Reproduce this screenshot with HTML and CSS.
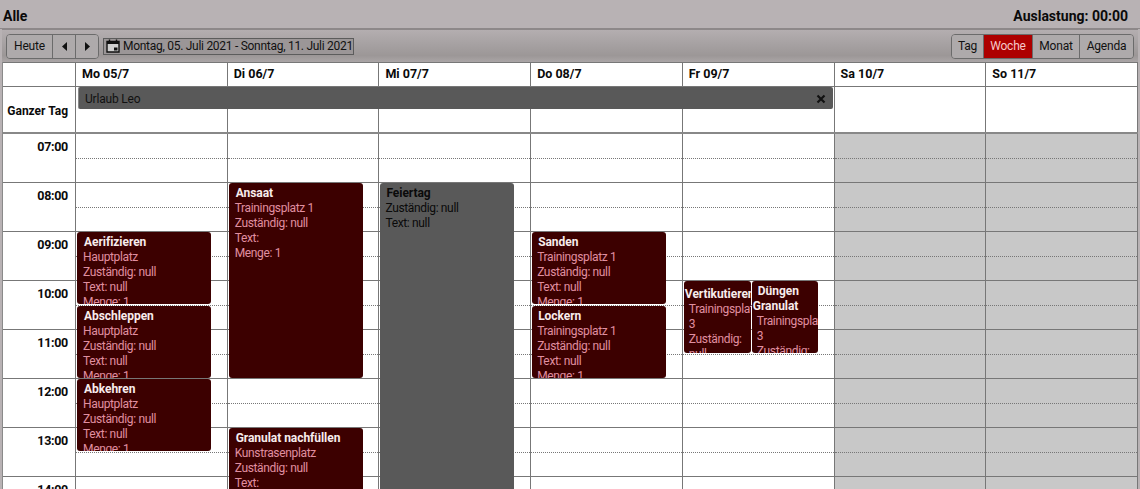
FILE: index.html
```html
<!DOCTYPE html>
<html lang="de">
<head>
<meta charset="utf-8">
<title>Kalender</title>
<link rel="stylesheet" href="styles.css">
</head>
<body>
<div class="page">
  <header class="titlebar"><span>Alle</span><span>Auslastung: 00:00</span></header>
  <div class="toolbar">
    <div class="btn-group">
      <button class="btn today">Heute</button>
      <button class="btn arrow"><svg width="7" height="9" viewBox="0 0 7 9"><path d="M6 0v9L1 4.500z" fill="#111"/></svg></button>
      <button class="btn arrow"><svg width="7" height="9" viewBox="0 0 7 9"><path d="M1 0v9l5-4.500z" fill="#111"/></svg></button>
    </div>
    <div class="daterange">
      <svg class="cal-icon" width="14" height="14" viewBox="0 0 14 14"><path d="M1 2.500h12v10.500H1z" fill="#cfcfcf" stroke="#111" stroke-width="1.400"/><path d="M1 2.500h12v2.500H1z" fill="#111"/><path d="M3.500 .5v2M10.500 .5v2" stroke="#111" stroke-width="1.400"/><path d="M8 8.500h3.500v3H8z" fill="#111"/></svg>
      <span>Montag, 05. Juli 2021 - Sonntag, 11. Juli 2021</span>
    </div>
    <div class="btn-group views">
      <button class="btn v-tag">Tag</button>
      <button class="btn v-woche active">Woche</button>
      <button class="btn v-monat">Monat</button>
      <button class="btn v-agenda">Agenda</button>
    </div>
  </div>
  <div class="calendar">
    <div class="row head">
      <div class="gutter"></div>
      <div class="cell">Mo 05/7</div><div class="cell">Di 06/7</div><div class="cell">Mi 07/7</div><div class="cell">Do 08/7</div><div class="cell">Fr 09/7</div><div class="cell">Sa 10/7</div><div class="cell">So 11/7</div>
    </div>
    <div class="row allday">
      <div class="gutter">Ganzer Tag</div>
      <div class="cell"></div><div class="cell"></div><div class="cell"></div><div class="cell"></div><div class="cell"></div><div class="cell"></div><div class="cell"></div>
      <div class="allday-event"><span>Urlaub Leo</span><svg width="10" height="10" viewBox="0 0 10 10"><path d="M1.500 1.500l7 7M8.500 1.500l-7 7" stroke="#111" stroke-width="2.200"/></svg></div>
    </div>
    <div class="times">
      <div class="gutter-col">
        <div class="hour">07:00</div><div class="hour">08:00</div><div class="hour">09:00</div><div class="hour">10:00</div><div class="hour">11:00</div><div class="hour">12:00</div><div class="hour">13:00</div><div class="hour">14:00</div>
      </div>
      <div class="day">
        <div class="slots"><i></i><i></i><i></i><i></i><i></i><i></i><i></i><i></i></div>
        <div class="ev w-full pad6 h9 ev-a"><b>Aerifizieren</b><p>Hauptplatz</p><p>Zuständig: null</p><p>Text: null</p><p>Menge: 1</p></div>
        <div class="ev w-full pad6 h9 ev-b"><b>Abschleppen</b><p>Hauptplatz</p><p>Zuständig: null</p><p>Text: null</p><p>Menge: 1</p></div>
        <div class="ev w-full pad6 h9 ev-c"><b>Abkehren</b><p>Hauptplatz</p><p>Zuständig: null</p><p>Text: null</p><p>Menge: 1</p></div>
      </div>
      <div class="day">
        <div class="slots"><i></i><i></i><i></i><i></i><i></i><i></i><i></i><i></i></div>
        <div class="ev w-full pad6 ev-ansaat"><b>Ansaat</b><p>Trainingsplatz 1</p><p>Zuständig: null</p><p>Text:</p><p>Menge: 1</p></div>
        <div class="ev w-full pad6 ev-granulat"><b>Granulat nachfüllen</b><p>Kunstrasenplatz</p><p>Zuständig: null</p><p>Text:</p></div>
      </div>
      <div class="day">
        <div class="slots"><i></i><i></i><i></i><i></i><i></i><i></i><i></i><i></i></div>
        <div class="ev w-full ev-feiertag"><b>Feiertag</b><p>Zuständig: null</p><p>Text: null</p></div>
      </div>
      <div class="day">
        <div class="slots"><i></i><i></i><i></i><i></i><i></i><i></i><i></i><i></i></div>
        <div class="ev w-full h9 ev-a"><b>Sanden</b><p>Trainingsplatz 1</p><p>Zuständig: null</p><p>Text: null</p><p>Menge: 1</p></div>
        <div class="ev w-full h9 ev-b"><b>Lockern</b><p>Trainingsplatz 1</p><p>Zuständig: null</p><p>Text: null</p><p>Menge: 1</p></div>
      </div>
      <div class="day">
        <div class="slots"><i></i><i></i><i></i><i></i><i></i><i></i><i></i><i></i></div>
        <div class="ev narrow ev-vert"><b>Vertikutieren</b><p>Trainingsplatz 3</p><p>Zuständig: null</p></div>
        <div class="ev narrow ev-dueng"><b class="dueng-a">Düngen</b><b>Granulat</b><p>Trainingsplatz 3</p><p>Zuständig: null</p></div>
      </div>
      <div class="day off"><div class="slots"><i></i><i></i><i></i><i></i><i></i><i></i><i></i><i></i></div></div>
      <div class="day off"><div class="slots"><i></i><i></i><i></i><i></i><i></i><i></i><i></i><i></i></div></div>
    </div>
  </div>
</div>
</body>
</html>
```
FILE: styles.css
```css
* { box-sizing: border-box; }
html, body { margin: 0; height: 100%; overflow: hidden; }
body { background: #b8b2b4; font-family: Roboto, "Open Sans", sans-serif; font-size: 12px; color: #111; }
.page { width: 1140px; height: 489px; overflow: hidden; }
.titlebar { height: 29px; display: flex; justify-content: space-between; align-items: center; padding: 3px 12px 0 3px; font-weight: 700; font-size: 14px; color: #0a0a0a; border-bottom: 1px solid #8d8889; }
.toolbar { height: 33px; margin-left: 2px; width: 1136px; display: flex; align-items: center; padding: 0 4px; background: linear-gradient(#b4aeb0 0%, #a6a1a2 45%, #9c9797 80%, #aaa5a6 100%); border-top: 1px solid #8d8889; }
.btn-group { display: flex; height: 25px; border: 1px solid #6b6b6b; border-radius: 4px; overflow: hidden; }
.btn { font: inherit; letter-spacing: -.2px; color: #111; height: 100%; border: 0; border-left: 1px solid #6b6b6b; background: #aeaaab; padding: 0; margin: 0; }
.btn:first-child { border-left: 0; }
.today { width: 45px; }
.arrow { width: 23px; display: flex; align-items: center; justify-content: center; }
.active { background: #ad0000; color: #f6c9c9; }
.v-tag { width: 31px; }
.v-woche { width: 49px; }
.v-monat { width: 47px; }
.v-agenda { width: 54px; }
.daterange { margin-left: 4px; height: 17px; display: flex; align-items: center; gap: 3px; padding: 0 2px; border: 1px solid #5c5c5c; background: #9b9697; white-space: nowrap; width: 251px; letter-spacing: -.28px; }
.cal-icon { flex: none; }
.views { margin-left: auto; }
.calendar { margin-left: 2px; width: 1136px; background: #fff; border-left: 1px solid #8a8a8a; }
.row { display: grid; grid-template-columns: 73px repeat(7, 1fr); position: relative; }
.row > .gutter, .row > .cell { border-right: 1px solid #777; }
.head { height: 25px; border-top: 1px solid #777; border-bottom: 1px solid #777; }
.head .cell { font-weight: 700; font-size: 12.500px; padding: 3px 0 0 6px; color: #0a0a0a; }
.allday { height: 47px; border-bottom: 2px solid #888; }
.allday .gutter { font-weight: 700; font-size: 12px; display: flex; align-items: center; justify-content: flex-end; padding: 2px 7px 0 0; color: #0a0a0a; }
.allday-event { position: absolute; left: 75px; right: 305px; top: 0; height: 22px; background: #595959; border-left: 1px solid #888; display: flex; align-items: center; justify-content: space-between; padding: 2px 7px 0 6px; color: #111; border-radius: 2px; letter-spacing: -.2px; }
.times { display: grid; grid-template-columns: 73px repeat(7, 1fr); height: 356px; overflow: hidden; }
.gutter-col { border-right: 1px solid #777; }
.hour { height: 49px; border-bottom: 1px solid #777; text-align: right; padding: 5px 7px 0 0; font-weight: 700; font-size: 12.500px; letter-spacing: -.3px; color: #0a0a0a; }
.day { position: relative; border-right: 1px solid #777; }
.slots i { display: block; height: 49px; border-bottom: 1px solid #777; position: relative; }
.slots i::after { content: ""; position: absolute; left: 0; right: 0; top: 24px; border-top: 1px dotted #777; }
.off { background: #c8c8c8; }
.ev { position: absolute; overflow: hidden; background: #3c0000; color: #e08fa0; border-radius: 3px; font-size: 12px; letter-spacing: -.35px; line-height: 15px; padding: 3px 5px 0; }
.pad6 { padding-left: 6px; }
.ev b { display: block; color: #f8ecec; font-weight: 700; font-size: 12px; letter-spacing: -.05px; margin-left: 1px; }
.ev p { margin: 0; }
.w-full { left: 1px; width: 134px; }
.h9 { height: 72px; }
.ev-a { top: 98px; }
.ev-b { top: 172px; }
.ev-c { top: 245px; }
.ev-ansaat { top: 49px; height: 195px; }
.ev-granulat { top: 294px; height: 90px; }
.ev-feiertag { top: 49px; height: 330px; background: #595959; color: #0a0a0a; }
.ev-feiertag b { color: #0a0a0a; }
.narrow { top: 147px; height: 72px; padding: 3px 0 0 1px; }
.narrow p { padding-left: 4px; }
.narrow b { margin-left: 0; }
.ev-vert { left: 1px; width: 67px; }
.ev-dueng { left: 69px; width: 66px; }
.ev-vert b { white-space: nowrap; margin-top: 3px; }
.dueng-a { padding-left: 5px; }
```
